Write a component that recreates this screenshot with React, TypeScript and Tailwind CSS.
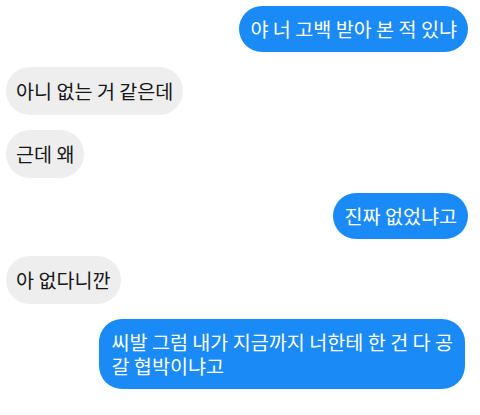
export default function App() {
  const font = { fontFamily: '"Noto Sans CJK KR", "Noto Sans", sans-serif' };
  const blue = "rounded-[23px] bg-[#1a8bf6] px-[11px] py-[11px] text-[19.6px] leading-6 text-white";
  const gray = "rounded-[24px] bg-[#eeeeee] px-[10px] py-[12px] text-[19.6px] leading-6 text-[#161616]";

  return (
    <div
      className="flex h-[415px] w-[480px] flex-col bg-white pl-[6px] pr-[12px] pt-[6px]"
      style={font}
    >
      <div className="flex justify-end">
        <div className={blue}>야 너 고백 받아 본 적 있냐</div>
      </div>
      <div className="mt-[15px] flex justify-start">
        <div className={gray}>아니 없는 거 같은데</div>
      </div>
      <div className="mt-[15px] flex justify-start">
        <div className={gray}>근데 왜</div>
      </div>
      <div className="mt-[15px] flex justify-end">
        <div className={blue}>진짜 없었냐고</div>
      </div>
      <div className="mt-[17px] flex justify-start">
        <div className={gray}>아 없다니깐</div>
      </div>
      <div className="mt-[15px] flex justify-end pr-[3px]">
        <div className="flex flex-col rounded-[23px] bg-[#1a8bf6] px-[12px] py-[11px] text-[19.6px] leading-6 text-white">
          <span>씨발 그럼 내가 지금까지 너한테 한 건 다 공</span>
          <span>갈 협박이냐고</span>
        </div>
      </div>
    </div>
  );
}
